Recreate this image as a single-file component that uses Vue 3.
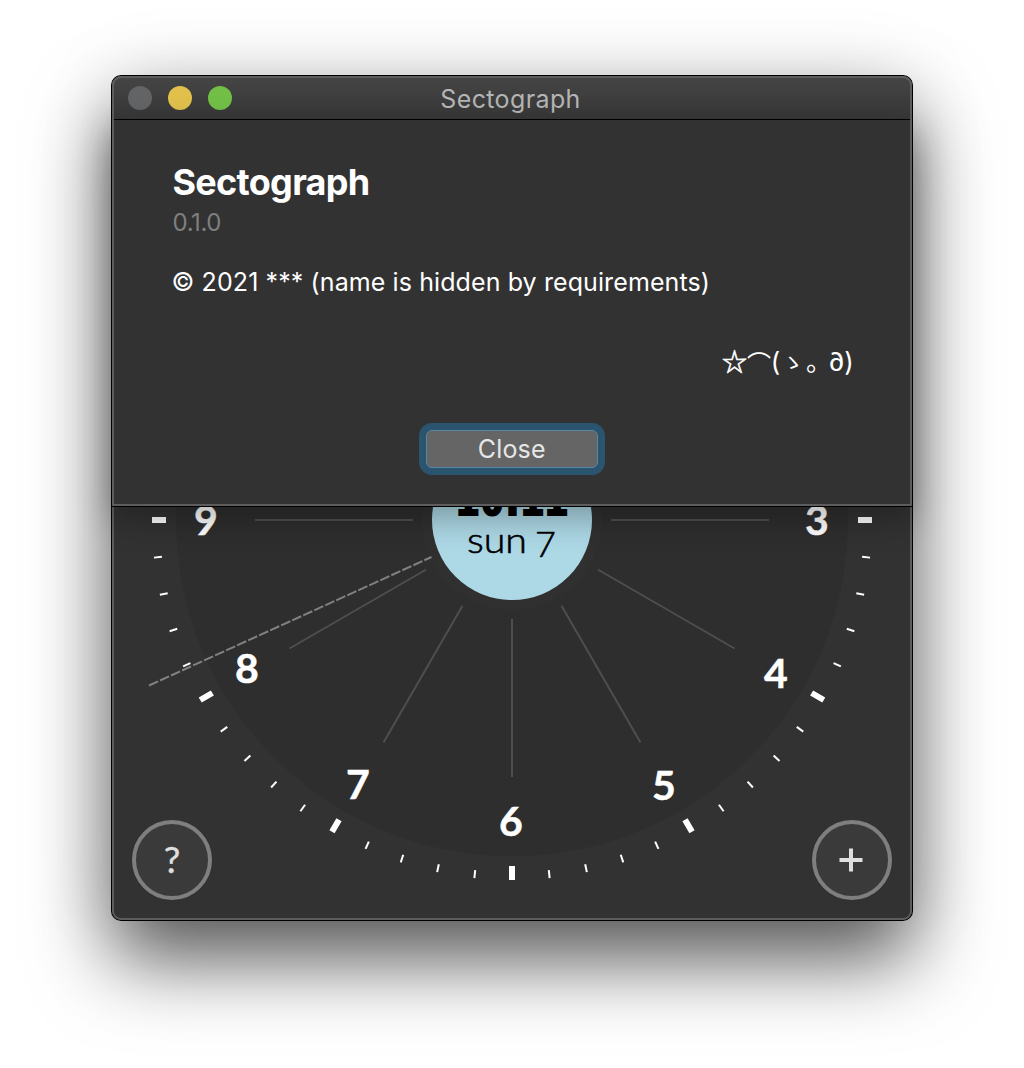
<script setup>
const rad = (deg) => (deg * Math.PI) / 180
const ticks = Array.from({ length: 60 }, (_, i) => ({ angle: i * 6, major: i % 5 === 0 }))
const spokes = Array.from({ length: 12 }, (_, i) => {
  const a = rad(i * 30)
  return {
    x1: 400 + 99 * Math.sin(a),
    y1: 400 - 99 * Math.cos(a),
    x2: 400 + 257 * Math.sin(a),
    y2: 400 - 257 * Math.cos(a),
  }
})
const numerals = [
  { n: 3, x: 705, y: 415 },
  { n: 4, x: 664, y: 567.5 },
  { n: 5, x: 552, y: 680 },
  { n: 6, x: 399, y: 715.5 },
  { n: 7, x: 246, y: 679 },
  { n: 8, x: 135, y: 562.5 },
  { n: 9, x: 94, y: 415 },
]
</script>

<template>
  <main class="desktop">
    <section class="window">
      <header class="titlebar">
        <div class="lights">
          <i class="light close"></i>
          <i class="light minimize"></i>
          <i class="light zoom"></i>
        </div>
        <span class="title">Sectograph</span>
      </header>
      <div class="content">
        <svg class="clock" viewBox="0 0 800 800" width="800" height="800">
          <circle cx="400" cy="400" r="336" fill="#2e2e2e" />
          <circle cx="400" cy="400" r="90" fill="#303030" />
          <line v-for="(s, i) in spokes" :key="i" :x1="s.x1" :y1="s.y1" :x2="s.x2" :y2="s.y2" stroke="#4e4e4e" stroke-width="2" />
          <line x1="37" y1="565.5" x2="319.5" y2="437" stroke="#818181" stroke-width="2" stroke-dasharray="10 2.1" />
          <rect
            v-for="t in ticks"
            :key="t.angle"
            :x="t.major ? 397 : 399"
            :y="40"
            :width="t.major ? 6 : 2"
            :height="t.major ? 14 : 8"
            fill="#fff"
            :transform="`rotate(${t.angle} 400 400)`"
          />
          <text v-for="d in numerals" :key="d.n" class="numeral" :x="d.x" :y="d.y">{{ d.n }}</text>
          <circle cx="400" cy="400" r="80" fill="#add8e6" />
          <text class="time" x="343.7 368.5 388.7 408.5 432.5" y="395">10:11</text>
          <text class="date" x="355" y="433" textLength="60" lengthAdjust="spacingAndGlyphs">sun</text>
          <text class="date" x="423" y="437">7</text>
        </svg>
        <button class="round help"><span>?</span></button>
        <button class="round">
          <svg viewBox="0 0 24 24" width="24" height="24"><path d="M12 0.5v23M0.5 12h23" stroke="#dfdfdf" stroke-width="4" /></svg>
        </button>
      </div>
      <div class="rim"></div>
      <div class="sheet">
        <h1>Sectograph</h1>
        <p class="version">0.1.0</p>
        <p class="copyright">© 2021 *** (name is hidden by requirements)</p>
        <p class="face">
          <span class="star">☆</span><span class="arc">⌒</span><span class="open">(</span><span class="mark">ゝ</span><span class="stop">。</span><span class="eye">∂</span><span class="shut">)</span>
        </p>
        <button class="ok">Close</button>
      </div>
    </section>
  </main>
</template>

<style>
body { margin: 0; background: #fff; }
</style>

<style scoped>
.desktop {
  box-sizing: border-box;
  width: 1024px;
  height: 1068px;
  padding: 76px 112px;
  overflow: hidden;
  background: #fff;
  font-family: Inter, "Noto Sans CJK JP", sans-serif;
}
.window {
  position: relative;
  width: 800px;
  height: 844px;
  border-radius: 9px;
  background: #323232;
  box-shadow: 0 0 0 1px #000, 0 0 80px rgba(0, 0, 0, 0.1), 0 40px 80px rgba(0, 0, 0, 0.64);
}
.titlebar {
  box-sizing: border-box;
  display: flex;
  align-items: center;
  height: 44px;
  padding: 0 16px;
  border-bottom: 1px solid #000;
  border-radius: 9px 9px 0 0;
  background: linear-gradient(#454545, #373737);
}
.lights { display: flex; gap: 16px; width: 104px; }
.light { width: 24px; height: 24px; border-radius: 50%; }
.close { background: #636465; }
.minimize { background: #e1c04c; }
.zoom { background: #72bf47; }
.title {
  flex: 1;
  padding: 3px 107px 0 0;
  text-align: center;
  color: #b5b5b5;
  font-size: 25px;
  letter-spacing: 0.38px;
}
.content {
  position: relative;
  box-sizing: border-box;
  display: flex;
  align-items: flex-end;
  justify-content: space-between;
  height: 800px;
  padding: 20px;
}
.clock { position: absolute; inset: 0; }
.numeral {
  fill: #fff;
  stroke: #fff;
  stroke-width: 0.5px;
  font: 700 41px Lato, sans-serif;
  text-anchor: middle;
}
.time {
  fill: #000;
  stroke: #000;
  stroke-width: 2px;
  font: 700 39px "DejaVu Sans Mono", monospace;
}
.date {
  fill: #000;
  stroke: #000;
  stroke-width: 0.6px;
  font: 300 36px Lato, sans-serif;
}
.round {
  position: relative;
  box-sizing: border-box;
  display: flex;
  align-items: center;
  justify-content: center;
  width: 80px;
  height: 80px;
  padding: 0 2px 0 0;
  border: 4px solid #7f7f7f;
  border-radius: 50%;
  background: #3a3a3a;
  color: #dfdfdf;
  font: 400 37px Lato, sans-serif;
}
.help { padding: 0 0 3px; -webkit-text-stroke: 0.4px #dfdfdf; }
.rim {
  position: absolute;
  inset: 0;
  border: 2px solid #5d5d5d;
  border-radius: 9px;
  box-sizing: border-box;
  pointer-events: none;
}
.sheet {
  position: absolute;
  top: 44px;
  left: 0;
  box-sizing: border-box;
  display: flex;
  flex-direction: column;
  width: 800px;
  height: 386px;
  padding: 39px 57px 0 58.5px;
  border: 2px solid #5d5d5d;
  border-top: 0;
  background: #323232;
  box-shadow: 0 1px 0 #000, 1px 0 0 #000, -1px 0 0 #000, 0 12px 32px rgba(0, 0, 0, 0.3);
  color: #fff;
}
h1 { margin: 0; font-size: 36px; line-height: 46px; font-weight: 700; letter-spacing: -0.7px; }
p { margin: 0; }
.version { padding-top: 1px; color: #7f7f7f; font-size: 24px; line-height: 33px; letter-spacing: -0.4px; }
.copyright { margin: 26px 0 0 -1px; font-size: 25px; line-height: 34px; letter-spacing: 0.1px; white-space: nowrap; }
.face {
  display: flex;
  justify-content: flex-end;
  height: 34px;
  margin-top: 46px;
  font-size: 26px;
  line-height: 34px;
}
.face span { display: flex; justify-content: center; }
.star {
  width: 25px;
  height: 30px;
  font-family: "Noto Sans CJK JP", sans-serif;
  font-size: 25px;
  line-height: 30px;
  -webkit-text-stroke: 0.6px #fff;
}
.arc { width: 24px; font-size: 24px; padding-top: 3px; }
.open { width: 9px; }
.mark { width: 25px; font-size: 22px; }
.stop { width: 18px; padding-left: 5px; font-size: 26px; }
.eye { width: 17px; }
.shut { width: 8px; }
.ok {
  align-self: center;
  width: 172px;
  height: 38px;
  margin: 51px 2px 0 0;
  padding: 0 0 1px;
  border: 1px solid #5a86a5;
  border-radius: 6px;
  background: #656565;
  box-shadow: 0 0 0 7px #2b546f;
  color: #e6e6e6;
  font: 400 25px Inter, sans-serif;
  letter-spacing: 0.2px;
}
</style>
